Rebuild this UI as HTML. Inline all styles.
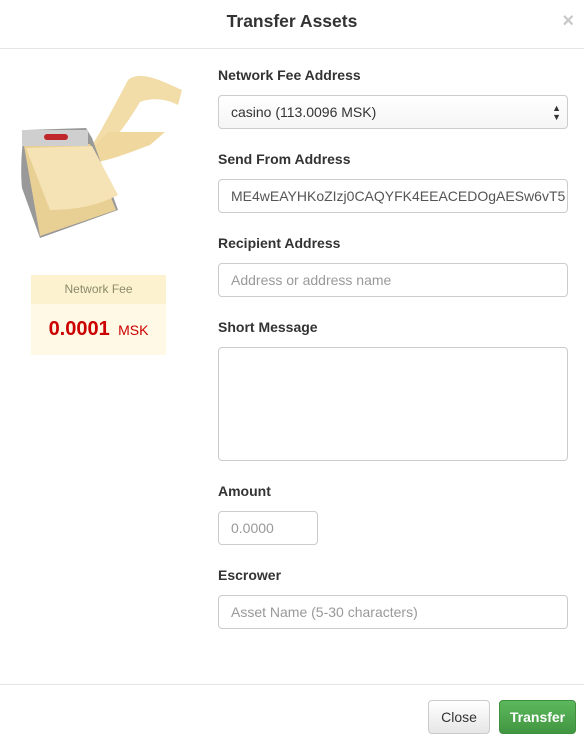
<!DOCTYPE html>
<html><head><meta charset="utf-8"><style>
*{box-sizing:border-box;margin:0;padding:0}
body{width:584px;height:742px;background:#fff;font-family:"Liberation Sans",sans-serif;color:#333;position:relative;overflow:hidden}
.hdr{height:49px;border-bottom:1px solid #e5e5e5;text-align:center;font-size:17.5px;font-weight:bold;line-height:43px;color:#333;position:relative}
.x{position:absolute;right:10px;top:0;font-size:20px;color:#c8c8c8;font-weight:bold}
.lbl{position:absolute;left:218px;font-size:14px;font-weight:bold;color:#333}
.inp{position:absolute;left:218px;width:350px;height:34px;border:1px solid #ccc;border-radius:4px;font-size:14px;padding:0 12px;line-height:32px;color:#555;white-space:nowrap;overflow:hidden}
.ph{color:#999}
.fee{position:absolute;left:31px;top:275px;width:135px;height:80px;background:#fff9e6}
.fee .t{height:29px;background:#fdf2d0;text-align:center;font-size:12px;color:#8a8a6a;line-height:28px}
.fee .v{text-align:center;line-height:50px;color:#c00}
.foot{position:absolute;top:684px;left:0;width:584px;border-top:1px solid #e5e5e5}
.btn{position:absolute;top:700px;height:34px;border-radius:4px;font-size:14px;line-height:32px;text-align:center}
</style></head><body>
<div class="hdr">Transfer Assets<span class="x">×</span></div>
<svg style="position:absolute;left:0;top:60px" width="200" height="190" viewBox="0 0 200 190">
<path d="M128 20 C140 10 160 20 182 30 L178 45 C165 38 150 38 140 42 C128 62 112 88 78 108 L100 72 Q115 45 128 20Z" fill="#f2dda8"/>
<path d="M108 72 L165 72 L150 85 C130 92 110 102 74 106 Z" fill="#efd79e"/>
<path d="M22 128 C20 110 22 75 26 70 L86 68 L92 78 L118 150 L40 178 Z" fill="#999"/>
<path d="M24 86 L90 84 L116 150 L40 176 Z" fill="#e8cf94"/>
<path d="M26 88 L92 86 L118 135 Q90 150 50 150 Z" fill="#f5e3b5"/>
<rect x="22" y="70" width="66" height="16" fill="#cfcfcf"/>
<rect x="44" y="74" width="24" height="6" rx="3" fill="#c0272d"/>
</svg>
<div class="fee"><div class="t">Network Fee</div><div class="v"><b style="font-size:20px">0.0001</b> <span style="font-size:14px">&nbsp;MSK</span></div></div>

<div class="lbl" style="top:67px">Network Fee Address</div>
<div class="inp" style="top:95px;background:linear-gradient(#fff,#f5f5f5);color:#333">casino (113.0096 MSK)<span style="position:absolute;right:6px;top:0;font-size:9px;line-height:9px;padding-top:8px;text-align:center">▲<br>▼</span></div>
<div class="lbl" style="top:151px">Send From Address</div>
<div class="inp" style="top:179px;color:#555">ME4wEAYHKoZIzj0CAQYFK4EEACEDOgAESw6vT5</div>
<div class="lbl" style="top:235px">Recipient Address</div>
<div class="inp ph" style="top:263px">Address or address name</div>
<div class="lbl" style="top:319px">Short Message</div>
<div class="inp" style="top:347px;height:114px"></div>
<div class="lbl" style="top:483px">Amount</div>
<div class="inp ph" style="top:511px;width:100px">0.0000</div>
<div class="lbl" style="top:567px">Escrower</div>
<div class="inp ph" style="top:595px">Asset Name (5-30 characters)</div>

<div class="foot"></div>
<div class="btn" style="left:428px;width:62px;border:1px solid #ccc;background:linear-gradient(#fff,#e6e6e6);color:#333">Close</div>
<div class="btn" style="left:499px;width:77px;border:1px solid #3e8f3e;background:linear-gradient(#5cb85c,#419641);color:#fff;font-weight:bold">Transfer</div>
</body></html>
